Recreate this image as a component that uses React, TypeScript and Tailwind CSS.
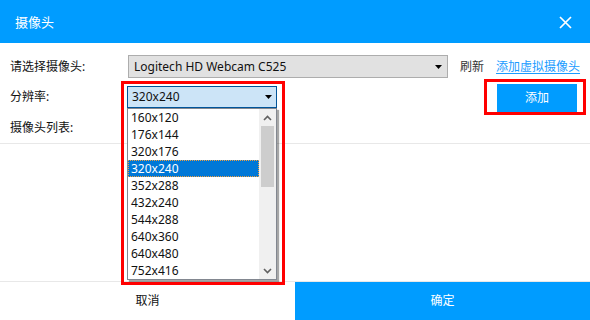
const sizes = [
  "160x120",
  "176x144",
  "320x176",
  "320x240",
  "352x288",
  "432x240",
  "544x288",
  "640x360",
  "640x480",
  "752x416",
];

function Caret() {
  return (
    <svg width="7" height="4" viewBox="0 0 7 4" className="shrink-0">
      <path d="M0 0h7L3.5 4z" fill="#000" />
    </svg>
  );
}

function Chevron({ up }: { up?: boolean }) {
  return (
    <svg width="9" height="6" viewBox="0 0 9 6">
      <path
        d={up ? "M1 5L4.5 1.5L8 5" : "M1 1L4.5 4.5L8 1"}
        fill="none"
        stroke="#606060"
        strokeWidth="1.6"
      />
    </svg>
  );
}

export default function App() {
  return (
    <div className="w-[590px] h-[320px] flex flex-col bg-white overflow-hidden font-['Noto_Sans','Noto_Sans_CJK_SC',sans-serif] text-[12px] text-[#111]">
      <header className="h-[43px] shrink-0 bg-[#009cff] flex items-center justify-between pl-[15px] pr-[18px]">
        <span className="text-white text-[13px] mt-[2px]">摄像头</span>
        <svg width="13" height="13" viewBox="0 0 13 13" className="mt-[1px]">
          <path d="M1 1l11 11M12 1L1 12" stroke="#fff" strokeWidth="1.7" />
        </svg>
      </header>

      <div className="flex-1 flex flex-col pt-[12px]">
        <div className="flex items-center h-[23px] pl-[10px]">
          <span className="w-[118px]">请选择摄像头:</span>
          <div className="w-[320px] h-[23px] bg-[#e1e1e1] border border-[#adadad] flex items-center justify-between pl-[5px] pr-[5px]">
            <span>Logitech HD Webcam C525</span>
            <Caret />
          </div>
          <span className="ml-[12px] text-[#333]">刷新</span>
          <a className="ml-[12px] text-[#1a9bff] underline underline-offset-2">添加虚拟摄像头</a>
        </div>

        <div className="flex items-start h-[28px] mt-[6px] pl-[10px]">
          <span className="w-[117px] mt-[4px]">分辨率:</span>
          <div className="relative mt-[2px] z-10">
            <div className="w-[150px] h-[22px] bg-[#cce4f7] border border-[#005499] flex items-center justify-between pl-[4px] pr-[4px]">
              <span>320x240</span>
              <Caret />
            </div>
            <div className="absolute left-0 top-[22px] w-[150px] bg-white border border-[#828790] shadow-[2px_2px_1px_rgba(0,0,0,0.35)] flex">
              <div className="flex-1 flex flex-col">
                {sizes.map((s) => (
                  <div
                    key={s}
                    className={
                      s === "320x240"
                        ? "h-[17px] flex items-center pl-[3px] bg-[#0078d7] text-white outline outline-1 outline-dotted outline-[#f0a040] -outline-offset-1"
                        : "h-[17px] flex items-center pl-[3px]"
                    }
                  >
                    {s}
                  </div>
                ))}
              </div>
              <div className="w-[17px] bg-[#f0f0f0] flex flex-col items-center">
                <div className="h-[17px] flex items-center justify-center">
                  <Chevron up />
                </div>
                <div className="w-[13px] h-[61px] bg-[#cdcdcd]" />
                <div className="flex-1" />
                <div className="h-[17px] flex items-center justify-center">
                  <Chevron />
                </div>
              </div>
            </div>
            <div className="absolute -left-[6px] -top-[5px] w-[164px] h-[204px] border-[3px] border-[#ff0000] pointer-events-none" />
          </div>
          <div className="ml-auto mr-[13px] relative">
            <button className="w-[80px] h-[28px] bg-[#009cff] text-white">添加</button>
            <div className="absolute -left-[13px] -top-[5px] w-[102px] h-[36px] border-[3px] border-[#ff0000] pointer-events-none" />
          </div>
        </div>

        <div className="h-[32px] flex items-center pl-[10px] border-b border-[#e8e8e8]">摄像头列表:</div>
        <div className="flex-1" />
      </div>

      <footer className="h-[39px] shrink-0 border-t border-[#e8e8e8] flex">
        <div className="flex-1 flex items-center justify-center">取消</div>
        <div className="flex-1 bg-[#009cff] text-white flex items-center justify-center">确定</div>
      </footer>
    </div>
  );
}
